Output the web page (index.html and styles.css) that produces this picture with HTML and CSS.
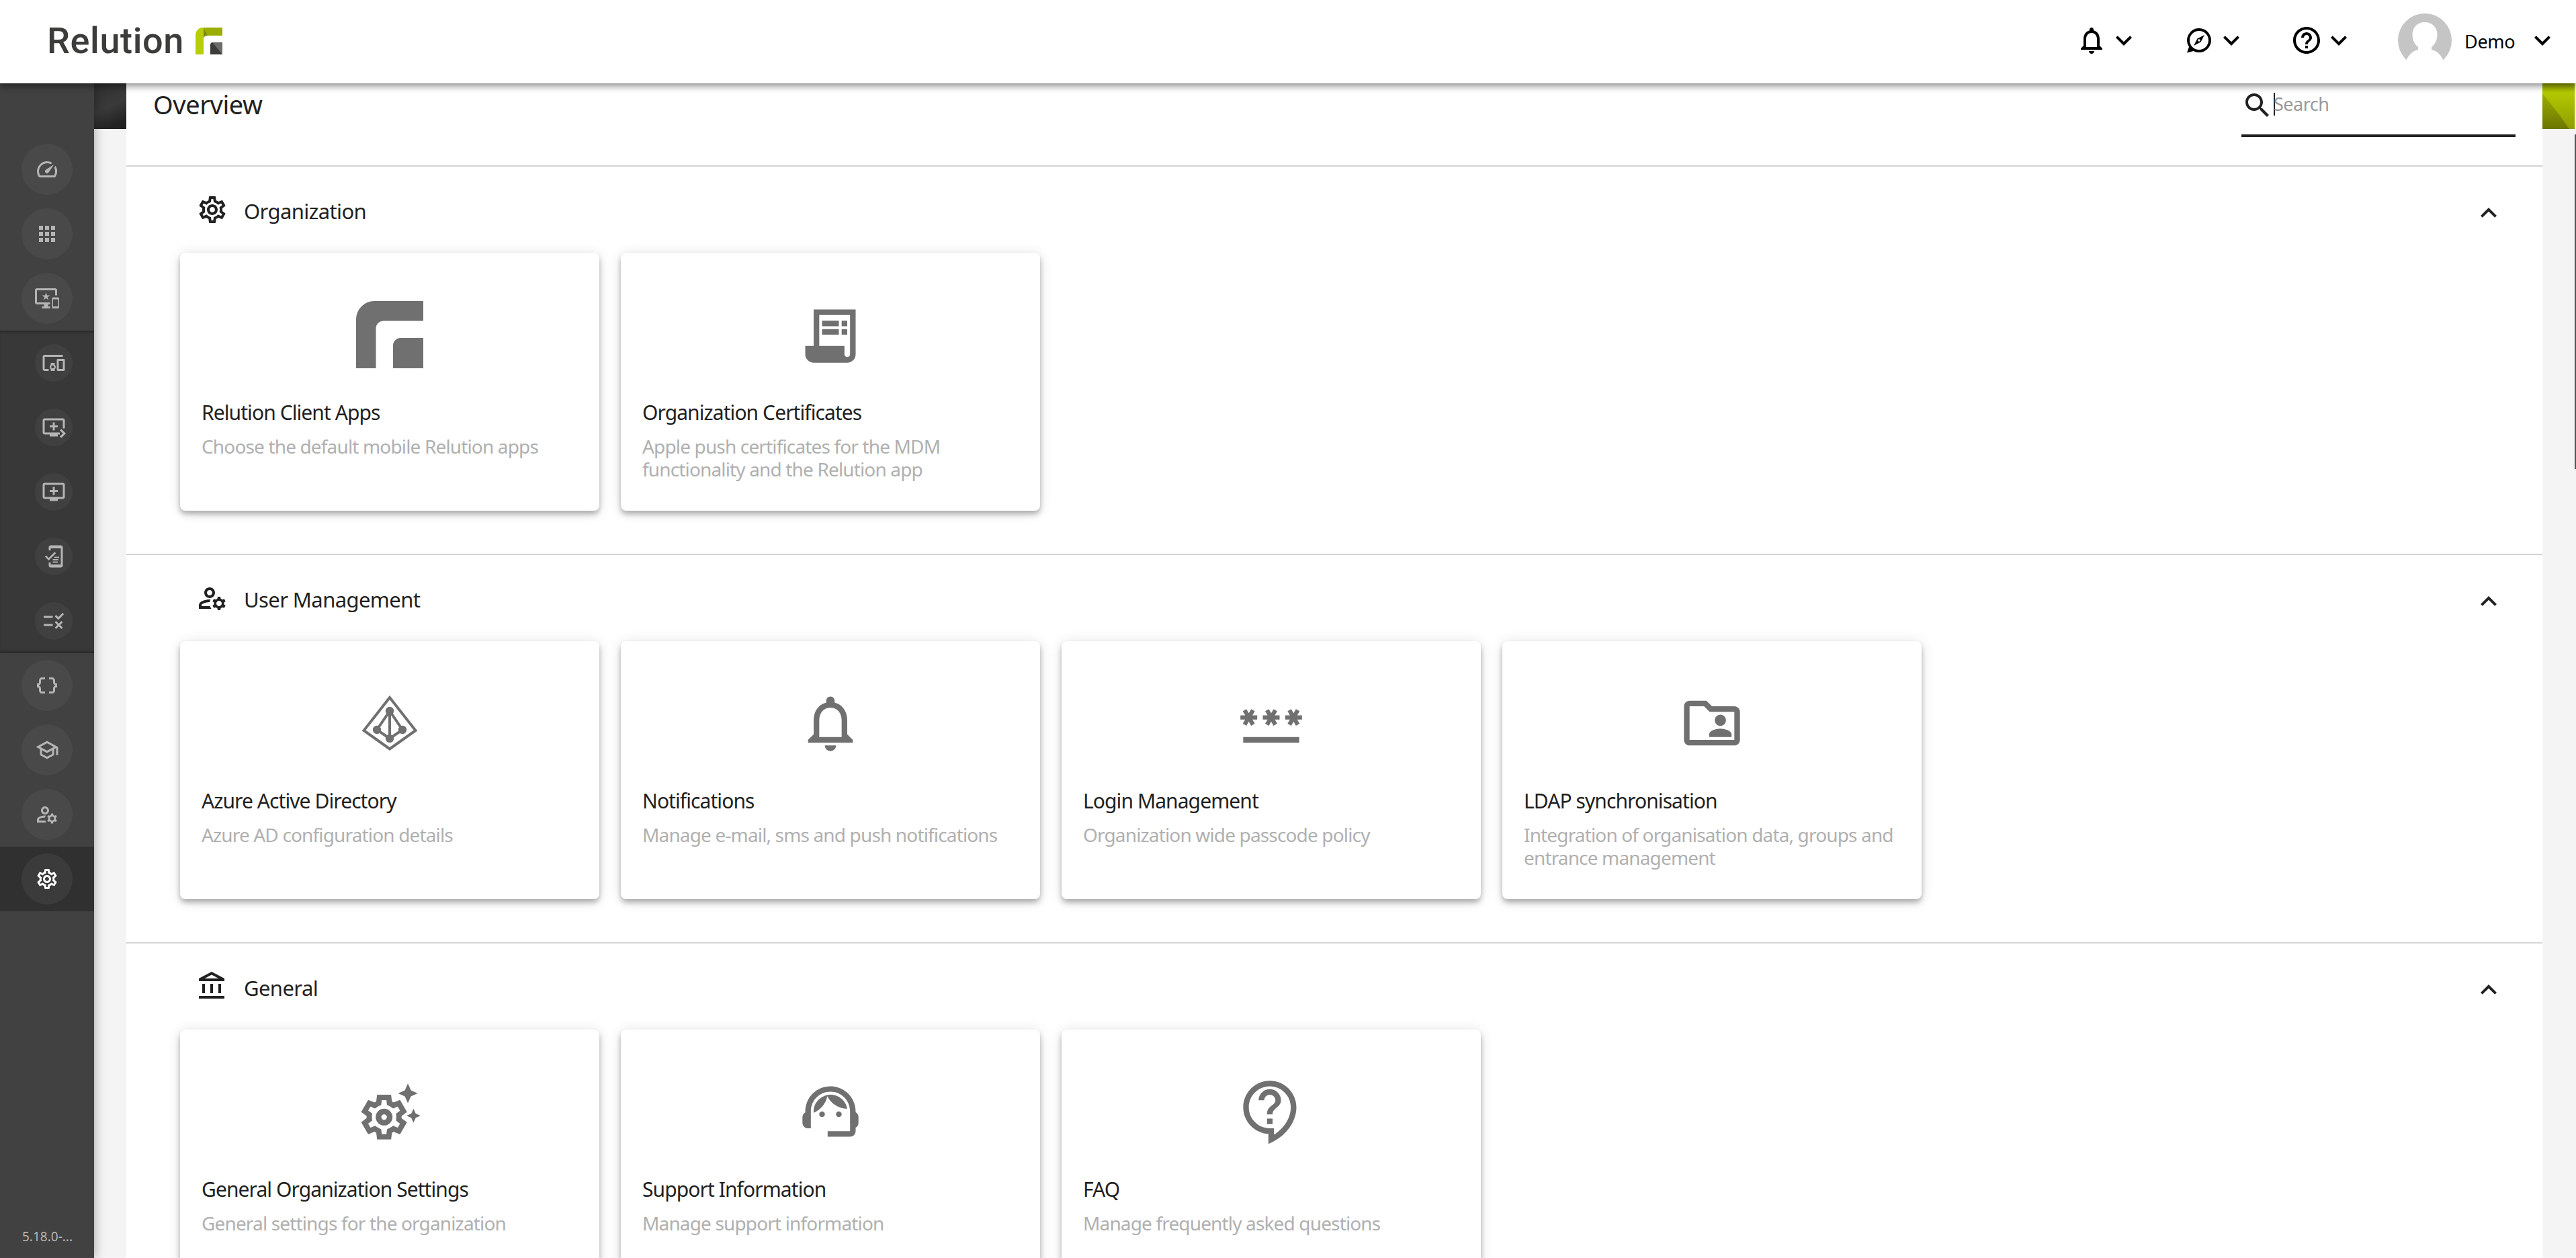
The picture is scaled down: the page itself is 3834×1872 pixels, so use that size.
FILE: index.html
```html
<!DOCTYPE html>
<html lang="en">

<head>
    <meta charset="UTF-8">
    <meta name="viewport" content="width=device-width, initial-scale=1.0">
    <title>Relution</title>
    <link rel="stylesheet" href="styles.css">
</head>

<body>
    <!-- icon sprite -->
    <svg class="sprite">
        <symbol id="bell" viewBox="0 0 24 24"><path d="M12 22c1.1 0 2-.9 2-2h-4c0 1.1.9 2 2 2zm6-6v-5c0-3.07-1.63-5.64-4.5-6.32V4c0-.83-.67-1.5-1.5-1.5s-1.5.67-1.5 1.5v.68C7.64 5.36 6 7.92 6 11v5l-2 2v1h16v-1l-2-2zm-2 1H8v-6c0-2.48 1.51-4.5 4-4.5s4 2.02 4 4.5v6z"/></symbol>
        <symbol id="down" viewBox="0 0 24 24"><path d="M16.59 8.59L12 13.17 7.41 8.59 6 10l6 6 6-6z"/></symbol>
        <symbol id="up" viewBox="0 0 24 24"><path d="M12 8l-6 6 1.41 1.41L12 10.83l4.59 4.58L18 14z"/></symbol>
        <symbol id="compass" viewBox="0 0 24 24"><path fill-rule="evenodd" d="M12 3a9 9 0 1 1-4.2 16.96L3 21.2l1.5-4.3A9 9 0 0 1 12 3zm0 2a7 7 0 1 0 0 14 7 7 0 0 0 0-14z"/><path fill-rule="evenodd" d="M16 8l-2.7 5.3L8 16l2.7-5.3zM12 11.1a.9.9 0 1 0 0 1.8.9.9 0 0 0 0-1.8z"/></symbol>
        <symbol id="help" viewBox="0 0 24 24"><path d="M11 18h2v-2h-2v2zm1-16C6.48 2 2 6.48 2 12s4.48 10 10 10 10-4.48 10-10S17.52 2 12 2zm0 18c-4.41 0-8-3.59-8-8s3.59-8 8-8 8 3.59 8 8-3.59 8-8 8zm0-14c-2.21 0-4 1.79-4 4h2c0-1.1.9-2 2-2s2 .9 2 2c0 2-3 1.75-3 5h2c0-2.25 3-2.5 3-5 0-2.21-1.79-4-4-4z"/></symbol>
        <symbol id="search" viewBox="0 0 24 24"><path d="M15.5 14h-.79l-.28-.27C15.41 12.59 16 11.11 16 9.5 16 5.91 13.09 3 9.5 3S3 5.91 3 9.5 5.91 16 9.5 16c1.61 0 3.09-.59 4.23-1.57l.27.28v.79l5 4.99L20.49 19l-4.99-5zm-6 0C7.01 14 5 11.99 5 9.5S7.01 5 9.5 5 14 7.01 14 9.5 11.99 14 9.5 14z"/></symbol>
        <symbol id="gauge" viewBox="0 0 24 24"><path d="M20.38 8.57l-1.23 1.85a8 8 0 0 1-.22 7.58H5.07A8 8 0 0 1 15.58 6.85l1.85-1.23A10 10 0 0 0 3.35 19a2 2 0 0 0 1.72 1h13.85a2 2 0 0 0 1.74-1 10 10 0 0 0-.27-10.44z"/><path d="M10.59 15.41a2 2 0 0 0 2.83 0l5.66-8.49-8.49 5.66a2 2 0 0 0 0 2.83z"/></symbol>
        <symbol id="apps" viewBox="0 0 24 24"><path d="M4 8h4V4H4v4zm6 12h4v-4h-4v4zm-6 0h4v-4H4v4zm0-6h4v-4H4v4zm6 0h4v-4h-4v4zm6-10v4h4V4h-4zm-6 4h4V4h-4v4zm6 6h4v-4h-4v4zm0 6h4v-4h-4v4z"/></symbol>
        <symbol id="important-devices" viewBox="0 0 24 24"><path d="M23 11.01L18 11c-.55 0-1 .45-1 1v9c0 .55.45 1 1 1h5c.55 0 1-.45 1-1v-9c0-.55-.45-.99-1-.99zM23 20h-5v-7h5v7zM20 2H2C.89 2 0 2.89 0 4v12c0 1.1.89 2 2 2h7v2H7v2h8v-2h-2v-2h2v-2H2V4h18v5h2V4c0-1.11-.9-2-2-2zm-8.03 7L11 6l-.97 3H7l2.47 1.76-.94 2.91 2.47-1.8 2.47 1.8-.94-2.91L15 9h-3.03z"/></symbol>
        <symbol id="devices" viewBox="0 0 24 24"><path d="M3 6h18V4H3c-1.1 0-2 .9-2 2v12c0 1.1.9 2 2 2h4v-2H3V6zm10 6H9v1.78c-.61.55-1 1.33-1 2.22s.39 1.67 1 2.22V20h4v-1.78c.61-.55 1-1.34 1-2.22s-.39-1.67-1-2.22V12zm-2 5.5c-.83 0-1.5-.67-1.5-1.5s.67-1.5 1.5-1.5 1.5.67 1.5 1.5-.67 1.5-1.5 1.5zM22 8h-6c-.5 0-1 .5-1 1v10c0 .5.5 1 1 1h6c.5 0 1-.5 1-1V9c0-.5-.5-1-1-1zm-1 10h-4v-8h4v8z"/></symbol>
        <symbol id="queue-next" viewBox="0 0 24 24"><path d="M21 3H3c-1.11 0-2 .89-2 2v12c0 1.1.89 2 2 2h5v2h8v-2h2v-2H3V5h18v8h2V5c0-1.11-.9-2-2-2zm-8 7V7h-2v3H8v2h3v3h2v-3h3v-2h-3zm11 8l-4.5 4.5L18 21l3-3-3-3 1.5-1.5L24 18z"/></symbol>
        <symbol id="queue-add" viewBox="0 0 24 24"><path d="M21 3H3c-1.11 0-2 .89-2 2v12c0 1.1.89 2 2 2h5v2h8v-2h5c1.1 0 1.99-.9 1.99-2L23 5c0-1.11-.9-2-2-2zm0 14H3V5h18v12zm-5-7v2h-3v3h-2v-3H8v-2h3V7h2v3h3z"/></symbol>
        <symbol id="compliance" viewBox="0 0 24 24"><path d="M19 1H9c-1.1 0-2 .9-2 2v3h2V4h10v16H9v-2H7v3c0 1.1.9 2 2 2h10c1.1 0 2-.9 2-2V3c0-1.1-.9-2-2-2zM7.01 13.47l-2.55-2.55L3.18 12.2 7 16l7.19-7.19-1.27-1.27zM12.4 12.4h5v1.1h-5zm-1.4 2.3h5.6v1.1H11zm0 2.3h5v1.1h-5z"/></symbol>
        <symbol id="rule" viewBox="0 0 24 24"><path d="M16.54 11L13 7.46l1.41-1.41 2.12 2.12 4.24-4.24 1.41 1.41L16.54 11zM11 7H2v2h9V7zm10 6.41L19.59 12 17 14.59 14.41 12 13 13.41 15.59 16 13 18.59 14.41 20 17 17.41 19.59 20 21 18.59 18.41 16 21 13.41zM11 15H2v2h9v-2z"/></symbol>
        <symbol id="braces" viewBox="0 0 24 24"><path d="M4 7v2c0 .55-.45 1-1 1H2v4h1c.55 0 1 .45 1 1v2c0 1.65 1.35 3 3 3h3v-2H7c-.55 0-1-.45-1-1v-2c0-1.3-.84-2.42-2-2.83v-.34C5.16 11.42 6 10.3 6 9V7c0-.55.45-1 1-1h3V4H7C5.35 4 4 5.35 4 7zM21 10c-.55 0-1-.45-1-1V7c0-1.65-1.35-3-3-3h-3v2h3c.55 0 1 .45 1 1v2c0 1.3.84 2.42 2 2.83v.34c-1.16.41-2 1.52-2 2.83v2c0 .55-.45 1-1 1h-3v2h3c1.65 0 3-1.35 3-3v-2c0-.55.45-1 1-1h1v-4h-1z"/></symbol>
        <symbol id="school" viewBox="0 0 24 24"><path d="M12 3L1 9l4 2.18v6L12 21l7-3.82v-6l2-1.09V17h2V9L12 3zm6.82 6L12 12.72 5.18 9 12 5.28 18.82 9zM17 15.99l-5 2.73-5-2.73v-3.72L12 15l5-2.73v3.72z"/></symbol>
        <symbol id="users" viewBox="0 0 24 24"><path d="M4 18v-.65c0-.34.16-.66.41-.81C6.1 15.53 8.03 15 10 15c.03 0 .05 0 .08.01.1-.7.3-1.37.59-1.98-.22-.02-.44-.03-.67-.03-2.42 0-4.68.67-6.61 1.82-.88.52-1.39 1.5-1.39 2.53V20h9.26c-.42-.6-.75-1.28-.97-2H4zM10 12c2.21 0 4-1.79 4-4s-1.79-4-4-4-4 1.79-4 4 1.79 4 4 4zm0-6c1.1 0 2 .9 2 2s-.9 2-2 2-2-.9-2-2 .9-2 2-2zM20.75 16c0-.22-.03-.42-.06-.63l1.14-1.01-1-1.73-1.45.49c-.32-.27-.68-.48-1.08-.63L18 11h-2l-.3 1.49c-.4.15-.76.36-1.08.63l-1.45-.49-1 1.73 1.14 1.01c-.03.21-.06.41-.06.63s.03.42.06.63l-1.14 1.01 1 1.73 1.45-.49c.32.27.68.48 1.08.63L16 21h2l.3-1.49c.4-.15.76-.36 1.08-.63l1.45.49 1-1.73-1.14-1.01c.03-.21.06-.41.06-.63zM17 18c-1.1 0-2-.9-2-2s.9-2 2-2 2 .9 2 2-.9 2-2 2z"/></symbol>
        <symbol id="gear" viewBox="0 0 24 24"><path d="M19.43 12.98c.04-.32.07-.64.07-.98 0-.34-.03-.66-.07-.98l2.11-1.65c.19-.15.24-.42.12-.64l-2-3.46c-.09-.16-.26-.25-.44-.25-.06 0-.12.01-.17.03l-2.49 1c-.52-.4-1.08-.73-1.69-.98l-.38-2.65C14.46 2.18 14.25 2 14 2h-4c-.25 0-.46.18-.49.42l-.38 2.65c-.61.25-1.17.59-1.69.98l-2.49-1c-.06-.02-.12-.03-.18-.03-.17 0-.34.09-.43.25l-2 3.46c-.13.22-.07.49.12.64l2.11 1.65c-.04.32-.07.65-.07.98 0 .33.03.66.07.98l-2.11 1.65c-.19.15-.24.42-.12.64l2 3.46c.09.16.26.25.44.25.06 0 .12-.01.17-.03l2.49-1c.52.4 1.08.73 1.69.98l.38 2.65c.03.24.24.42.49.42h4c.25 0 .46-.18.49-.42l.38-2.65c.61-.25 1.17-.59 1.69-.98l2.49 1c.06.02.12.03.18.03.17 0 .34-.09.43-.25l2-3.46c.12-.22.07-.49-.12-.64l-2.11-1.65zm-1.98-1.71c.04.31.05.52.05.73 0 .21-.02.43-.05.73l-.14 1.13.89.7 1.08.84-.7 1.21-1.27-.51-1.04-.42-.9.68c-.43.32-.84.56-1.25.73l-1.06.43-.16 1.13-.2 1.35h-1.4l-.19-1.35-.16-1.13-1.06-.43c-.43-.18-.83-.41-1.23-.71l-.91-.7-1.06.43-1.27.51-.7-1.21 1.08-.84.89-.7-.14-1.13c-.03-.31-.05-.54-.05-.74s.02-.43.05-.73l.14-1.13-.89-.7-1.08-.84.7-1.21 1.27.51 1.04.42.9-.68c.43-.32.84-.56 1.25-.73l1.06-.43.16-1.13.2-1.35h1.39l.19 1.35.16 1.13 1.06.43c.43.18.83.41 1.23.71l.91.7 1.06-.43 1.27-.51.7 1.21-1.07.85-.89.7.14 1.13zM12 8c-2.21 0-4 1.79-4 4s1.79 4 4 4 4-1.79 4-4-1.79-4-4-4zm0 6c-1.1 0-2-.9-2-2s.9-2 2-2 2 .9 2 2-.9 2-2 2z"/></symbol>
        <symbol id="bank" viewBox="0 0 24 24"><path d="M6.5 10h-2v7h2v-7zm6 0h-2v7h2v-7zm8.5 9H2v2h19v-2zm-2.5-9h-2v7h2v-7zM11.5 3.26L16.71 6H6.29l5.21-2.74m0-2.26L2 6v2h19V6l-9.5-5z"/></symbol>
        <symbol id="relution" viewBox="0 0 100 100"><path d="M0 100V27A27 27 0 0 1 27 0h73v29.500H40A11 11 0 0 0 29.500 40v60zM55 100V66a11 11 0 0 1 11-11h34v45z"/></symbol>
        <symbol id="certificate" viewBox="0 0 24 24"><path fill-rule="evenodd" d="M6 3h15v16a3 3 0 0 1-3 3H6a3 3 0 0 1-3-3v-3h3zm2 2v11h9v3a1 1 0 0 0 2 0V5zM9 7h6v2H9zm7 0h2v2h-2zm-7 3h6v2H9zm7 0h2v2h-2z"/></symbol>
        <symbol id="azure" viewBox="0 0 100 100">
            <path fill="none" stroke="currentColor" stroke-width="4" d="M50 12L88.500 61 50 88.500 11.500 61z"/>
            <path fill="none" stroke="currentColor" stroke-width="4" d="M50 32v41M50 32L31 60l19 13 19-13z"/>
            <circle cx="50" cy="32" r="6.200"/><circle cx="31" cy="60" r="6.200"/><circle cx="69" cy="60" r="6.200"/><circle cx="50" cy="73" r="6.200"/>
        </symbol>
        <symbol id="password" viewBox="0 0 24 24"><path d="M2 17h20v2H2zm1.150-4.050L4 11.470l.85 1.480 1.300-.75-.85-1.480H7v-1.500H5.300l.85-1.470L4.850 7 4 8.470 3.150 7l-1.300.75.85 1.470H1v1.500h1.700l-.85 1.480zm6.700-.75l1.300.75.85-1.480.85 1.480 1.300-.75-.85-1.480H15v-1.500h-1.700l.85-1.470-1.300-.75L12 8.470 11.150 7l-1.300.75.85 1.470H9v1.500h1.700zM23 9.220h-1.700l.85-1.470-1.300-.75L20 8.470 19.150 7l-1.300.75.85 1.470H17v1.500h1.700l-.85 1.480 1.300.75.85-1.480.85 1.480 1.300-.75-.85-1.480H23z"/></symbol>
        <symbol id="folder-user" viewBox="0 0 24 24"><path d="M20 6h-8l-2-2H4c-1.100 0-1.990.9-1.990 2L2 18c0 1.100.9 2 2 2h16c1.100 0 2-.9 2-2V8c0-1.100-.9-2-2-2zm0 12H4V6h5.170l2 2H20v10zm-5-5c1.100 0 2-.9 2-2s-.9-2-2-2-2 .9-2 2 .9 2 2 2zm-4 4h8v-1c0-1.330-2.670-2-4-2s-4 .67-4 2v1z"/></symbol>
        <clipPath id="gear-shape"><path d="M16.240 14.370l1.940 1.470-2.500 4.330-2.240-.94c-.2.13-.42.26-.64.37l-.3 2.400h-5l-.3-2.410c-.22-.11-.43-.23-.64-.37l-2.240.94-2.500-4.330 1.940-1.470c-.01-.11-.01-.24-.01-.36s0-.25.01-.37l-1.940-1.470 2.500-4.330 2.240.94c.2-.13.42-.26.64-.37L7.500 6h5l.3 2.410c.22.11.43.23.64.37l2.240-.94 2.500 4.330-1.940 1.470c.01.12.01.24.01.37s0 .24-.01.360z"/></clipPath>
        <symbol id="gear-stars" viewBox="0 0 24 24">
            <path d="M17.410 6.590L15 5.500l2.410-1.090L18.500 2l1.090 2.410L22 5.500l-2.410 1.090L18.500 9zM21.280 12.720L20.500 11l-.78 1.720-1.720.78 1.720.78.78 1.720.78-1.720L23 13.500z"/>
            <path clip-path="url(#gear-shape)" fill="none" stroke="currentColor" stroke-width="3.800" d="M16.240 14.370l1.940 1.470-2.500 4.330-2.240-.94c-.2.13-.42.26-.64.37l-.3 2.400h-5l-.3-2.410c-.22-.11-.43-.23-.64-.37l-2.240.94-2.500-4.330 1.940-1.470c-.01-.11-.01-.24-.01-.36s0-.25.01-.37l-1.940-1.470 2.500-4.330 2.240.94c.2-.13.42-.26.64-.37L7.500 6h5l.3 2.410c.22.11.43.23.64.37l2.240-.94 2.500 4.330-1.940 1.470c.01.12.01.24.01.37s0 .24-.01.360z"/>
            <circle cx="10" cy="14" r="2" fill="none" stroke="currentColor" stroke-width="2"/>
        </symbol>
        <symbol id="support" viewBox="0 0 24 24"><path d="M21 12.220C21 6.730 16.740 3 12 3c-4.690 0-9 3.650-9 9.280-.6.34-1 .98-1 1.720v2c0 1.100.9 2 2 2h1v-6.100c0-3.870 3.130-7 7-7s7 3.130 7 7V19h-8v2h8c1.100 0 2-.9 2-2v-1.220c.59-.31 1-.92 1-1.640v-2.300c0-.7-.41-1.310-1-1.620z"/><circle cx="9" cy="13" r="1"/><circle cx="15" cy="13" r="1"/><path d="M18 11.030C17.520 8.180 15.040 6 12.050 6c-3.030 0-6.290 2.510-6.030 6.450 2.470-1.010 4.330-3.210 4.860-5.890 1.310 2.630 4 4.440 7.120 4.470z"/></symbol>
        <symbol id="faq" viewBox="0 0 24 24"><path d="M11 23.590v-3.600c-5.010-.26-9-4.420-9-9.490C2 5.260 6.260 1 11.500 1S21 5.260 21 10.500c0 4.950-3.440 9.930-8.570 12.400l-1.430.690zM11.500 3C7.360 3 4 6.360 4 10.500S7.360 18 11.500 18H13v2.300c3.640-2.300 6-6.080 6-9.800C19 6.360 15.640 3 11.500 3zm-1 11.500h2v2h-2v-2zm2-1.500h-2c0-3.250 3-3 3-5 0-1.100-.9-2-2-2s-2 .9-2 2h-2c0-2.210 1.790-4 4-4s4 1.790 4 4c0 2.500-3 2.750-3 5z"/></symbol>
    </svg>

    <header class="topbar">
        <div class="logo">
            <span class="logo-text">Relution</span>
            <svg class="logo-mark" viewBox="0 0 40 40">
                <path fill="#b7cd07" d="M0 40V11A11 11 0 0 1 11 0h2v13q-1 1-1 3v24z"/>
                <path fill="#9aad00" d="M11 0h29v12H16q-3 0-4 2V0z"/>
                <path fill="#7c8810" d="M12 1l6 11q-4 0-6 3z"/>
                <path fill="#3c3c3a" d="M22 40V26a4 4 0 0 1 4-4h14v18z"/>
                <path fill="#6c6c6a" d="M25 22h15v18z"/>
            </svg>
        </div>
        <nav class="topbar-menu">
            <button class="menu-button"><svg class="icon"><use href="#bell"/></svg><svg class="icon"><use href="#down"/></svg></button>
            <button class="menu-button"><svg class="icon"><use href="#compass"/></svg><svg class="icon"><use href="#down"/></svg></button>
            <button class="menu-button"><svg class="icon"><use href="#help"/></svg><svg class="icon"><use href="#down"/></svg></button>
            <button class="menu-button">
                <svg class="avatar" viewBox="0 0 80 80">
                    <circle cx="40" cy="40" r="40" fill="#c5c5c5"/>
                    <path fill="#fff" d="M40 13c11 0 18.500 8 18.500 18 0 8-3 15-8.500 19v4c10 2 16 10 19.500 21V80h-59v-5C14 64 20 56 30 54v-4c-5.500-4-8.500-11-8.500-19C21.500 21 29 13 40 13z"/>
                </svg>
                <span class="user-name">Demo</span>
                <svg class="icon"><use href="#down"/></svg>
            </button>
        </nav>
    </header>

    <div class="layout">
        <aside class="sidebar">
            <div class="nav-item"><span class="nav-circle"><svg><use href="#gauge"/></svg></span></div>
            <div class="nav-item"><span class="nav-circle"><svg><use href="#apps"/></svg></span></div>
            <div class="nav-item"><span class="nav-circle"><svg><use href="#important-devices"/></svg></span></div>
            <div class="nav-sub">
                <div class="nav-item"><span class="nav-circle"><svg><use href="#devices"/></svg></span></div>
                <div class="nav-item"><span class="nav-circle"><svg><use href="#queue-next"/></svg></span></div>
                <div class="nav-item"><span class="nav-circle"><svg><use href="#queue-add"/></svg></span></div>
                <div class="nav-item"><span class="nav-circle"><svg><use href="#compliance"/></svg></span></div>
                <div class="nav-item"><span class="nav-circle"><svg><use href="#rule"/></svg></span></div>
            </div>
            <div class="nav-item"><span class="nav-circle"><svg><use href="#braces"/></svg></span></div>
            <div class="nav-item"><span class="nav-circle"><svg><use href="#school"/></svg></span></div>
            <div class="nav-item"><span class="nav-circle"><svg><use href="#users"/></svg></span></div>
            <div class="nav-item active"><span class="nav-circle"><svg><use href="#gear"/></svg></span></div>
            <div class="version">5.18.0-...</div>
        </aside>

        <div class="banner-left"></div>

        <main class="panel">
            <div class="panel-head">
                <h1>Overview</h1>
                <div class="search">
                    <svg class="icon"><use href="#search"/></svg>
                    <span class="search-input">Search</span>
                </div>
            </div>

            <section class="section">
                <div class="section-head">
                    <svg class="icon"><use href="#gear"/></svg>
                    <h2>Organization</h2>
                    <svg class="icon toggle"><use href="#up"/></svg>
                </div>
                <div class="cards">
                    <div class="card">
                        <svg><use href="#relution"/></svg>
                        <h3>Relution Client Apps</h3>
                        <p>Choose the default mobile Relution apps</p>
                    </div>
                    <div class="card">
                        <svg><use href="#certificate"/></svg>
                        <h3>Organization Certificates</h3>
                        <p>Apple push certificates for the MDM functionality and the Relution app</p>
                    </div>
                </div>
            </section>

            <section class="section">
                <div class="section-head">
                    <svg class="icon"><use href="#users"/></svg>
                    <h2>User Management</h2>
                    <svg class="icon toggle"><use href="#up"/></svg>
                </div>
                <div class="cards">
                    <div class="card">
                        <svg><use href="#azure"/></svg>
                        <h3>Azure Active Directory</h3>
                        <p>Azure AD configuration details</p>
                    </div>
                    <div class="card">
                        <svg><use href="#bell"/></svg>
                        <h3>Notifications</h3>
                        <p>Manage e-mail, sms and push notifications</p>
                    </div>
                    <div class="card">
                        <svg><use href="#password"/></svg>
                        <h3>Login Management</h3>
                        <p>Organization wide passcode policy</p>
                    </div>
                    <div class="card">
                        <svg><use href="#folder-user"/></svg>
                        <h3>LDAP synchronisation</h3>
                        <p>Integration of organisation data, groups and entrance management</p>
                    </div>
                </div>
            </section>

            <section class="section">
                <div class="section-head">
                    <svg class="icon"><use href="#bank"/></svg>
                    <h2>General</h2>
                    <svg class="icon toggle"><use href="#up"/></svg>
                </div>
                <div class="cards">
                    <div class="card">
                        <svg><use href="#gear-stars"/></svg>
                        <h3>General Organization Settings</h3>
                        <p>General settings for the organization</p>
                    </div>
                    <div class="card">
                        <svg><use href="#support"/></svg>
                        <h3>Support Information</h3>
                        <p>Manage support information</p>
                    </div>
                    <div class="card">
                        <svg><use href="#faq"/></svg>
                        <h3>FAQ</h3>
                        <p>Manage frequently asked questions</p>
                    </div>
                </div>
            </section>
        </main>

        <svg class="banner-right" viewBox="0 0 48 68">
            <defs>
                <linearGradient id="green" x1="0" y1="0" x2="0" y2="1">
                    <stop offset="0" stop-color="#8e9c00"/>
                    <stop offset=".2" stop-color="#b3c800"/>
                    <stop offset="1" stop-color="#8f9d00"/>
                </linearGradient>
                <linearGradient id="green-dark" x1="0" y1="0" x2="0" y2="1">
                    <stop offset="0" stop-color="#9dad00"/>
                    <stop offset="1" stop-color="#6c7600"/>
                </linearGradient>
            </defs>
            <path fill="url(#green)" d="M0 0h48v68H0z"/>
            <path fill="url(#green-dark)" d="M0 15l26 33 14 20H0z"/>
        </svg>

        <div class="scroll-track">
            <div class="scroll-thumb"></div>
        </div>
    </div>
</body>

</html>
```
FILE: styles.css
```css
* {
    box-sizing: border-box;
}

body {
    margin: 0;
    height: 1872px;
    display: flex;
    flex-direction: column;
    overflow: hidden;
    font-family: "Noto Sans", sans-serif;
    color: #212121;
    background-color: #f4f4f4;
}

h1,
h2,
h3,
p {
    margin: 0;
    font-weight: 400;
}

svg {
    display: block;
    flex-shrink: 0;
    fill: currentColor;
}

.sprite {
    position: absolute;
    width: 0;
    height: 0;
}

.icon {
    width: 48px;
    height: 48px;
}

/* Top bar */
.topbar {
    position: relative;
    z-index: 2;
    flex-shrink: 0;
    height: 124px;
    padding: 0 26px 4px 70px;
    display: flex;
    align-items: center;
    justify-content: space-between;
    background-color: #fff;
    box-shadow: 0 4px 10px rgba(0, 0, 0, 0.45);
}

.logo {
    display: flex;
    align-items: center;
    gap: 14px;
}

.logo-text {
    width: 207px;
    padding-top: 2px;
    font-family: Roboto, sans-serif;
    font-size: 54px;
    font-weight: 500;
    line-height: 64px;
    letter-spacing: 0.6px;
    color: #3c3c3a;
}

.logo-mark {
    width: 40px;
    height: 40px;
    margin-top: 2px;
}

.topbar-menu {
    display: flex;
    align-items: center;
    gap: 64px;
    color: #000;
}

.menu-button {
    display: flex;
    align-items: center;
    padding: 0;
    border: 0;
    background: none;
    color: inherit;
    font-family: inherit;
    cursor: pointer;
}

.avatar {
    width: 80px;
    height: 80px;
}

.user-name {
    width: 92px;
    margin-left: 19px;
    padding-top: 2px;
    text-align: left;
    font-size: 27px;
    letter-spacing: -0.3px;
}

/* Layout */
.layout {
    flex: 1;
    min-height: 0;
    display: grid;
    grid-template-columns: 140px 48px 1fr 48px 2px;
}

.sidebar {
    position: relative;
    z-index: 1;
    display: flex;
    flex-direction: column;
    min-height: 0;
    padding-top: 80px;
    background-color: #414141;
    color: #b5b5b5;
    box-shadow: 0 0 16px rgba(0, 0, 0, 0.35);
}

.nav-item {
    height: 96px;
    display: flex;
    align-items: center;
    justify-content: center;
}

.nav-circle {
    width: 76px;
    height: 76px;
    display: flex;
    align-items: center;
    justify-content: center;
    border-radius: 50%;
    background-color: #494949;
}

.nav-circle svg {
    width: 36px;
    height: 36px;
}

.nav-sub {
    background-color: #383838;
    box-shadow: inset 0 6px 4px -4px #262626, inset 0 -6px 4px -4px #262626;
}

.nav-sub .nav-item {
    padding-left: 20px;
}

.nav-sub .nav-circle {
    width: 56px;
    height: 56px;
    background-color: #404040;
}

.nav-item.active {
    background-color: #303030;
    color: #fff;
}

.active .nav-circle {
    background-color: #3b3b3b;
}

.version {
    margin-top: auto;
    padding: 0 0 20px 33px;
    font-size: 19px;
    line-height: 24px;
    color: #b5b5b5;
}

.banner-left {
    height: 68px;
    background: linear-gradient(155deg, #303030, #3a3a3a 50%, #222 85%);
}

.banner-right {
    width: 48px;
    height: 68px;
}

.scroll-track {
    padding-top: 76px;
}

.scroll-thumb {
    height: 498px;
    background-color: #555;
}

/* Panel */
.panel {
    min-width: 0;
    min-height: 0;
    overflow: hidden;
    background-color: #fff;
}

.panel-head {
    height: 122px;
    padding: 0 40px;
    display: flex;
    align-items: flex-start;
    justify-content: space-between;
}

.panel-head h1 {
    padding-top: 7px;
    font-size: 38px;
    line-height: 48px;
    letter-spacing: -0.4px;
}

.search {
    width: 408px;
    height: 80px;
    padding-top: 9px;
    display: flex;
    align-items: flex-start;
    border-bottom: 4px solid #212121;
}

.search-input {
    height: 34px;
    margin-top: 5px;
    border-left: 2px solid #212121;
    font-size: 27px;
    line-height: 34px;
    letter-spacing: -0.5px;
    text-indent: -2px;
    color: #999;
}

.section {
    height: 578px;
    padding: 0 80px;
    border-top: 2px solid #d4d4d4;
}

.section-head {
    height: 128px;
    display: flex;
    align-items: center;
    margin-right: -24px;
    padding-left: 24px;
}

.section-head h2 {
    margin: 4px auto 0 23px;
    font-size: 31px;
    line-height: 44px;
    letter-spacing: -0.6px;
}

.toggle {
    margin-top: 10px;
}

.cards {
    display: flex;
    gap: 32px;
}

.card {
    width: 624px;
    height: 384px;
    padding: 72px 32px 0;
    border-radius: 8px;
    background-color: #fff;
    box-shadow: 0 4px 8px -2px rgba(0, 0, 0, 0.2), 0 6px 8px rgba(0, 0, 0, 0.16), 0 2px 20px rgba(0, 0, 0, 0.12);
}

.card svg {
    width: 100px;
    height: 100px;
    margin: 0 auto 46px;
    color: #707070;
}

.card h3 {
    font-size: 30px;
    line-height: 40px;
    letter-spacing: -0.92px;
}

.card p {
    margin-top: 13px;
    font-size: 28px;
    line-height: 34px;
    letter-spacing: -0.85px;
    color: #b0b0b0;
}
```
